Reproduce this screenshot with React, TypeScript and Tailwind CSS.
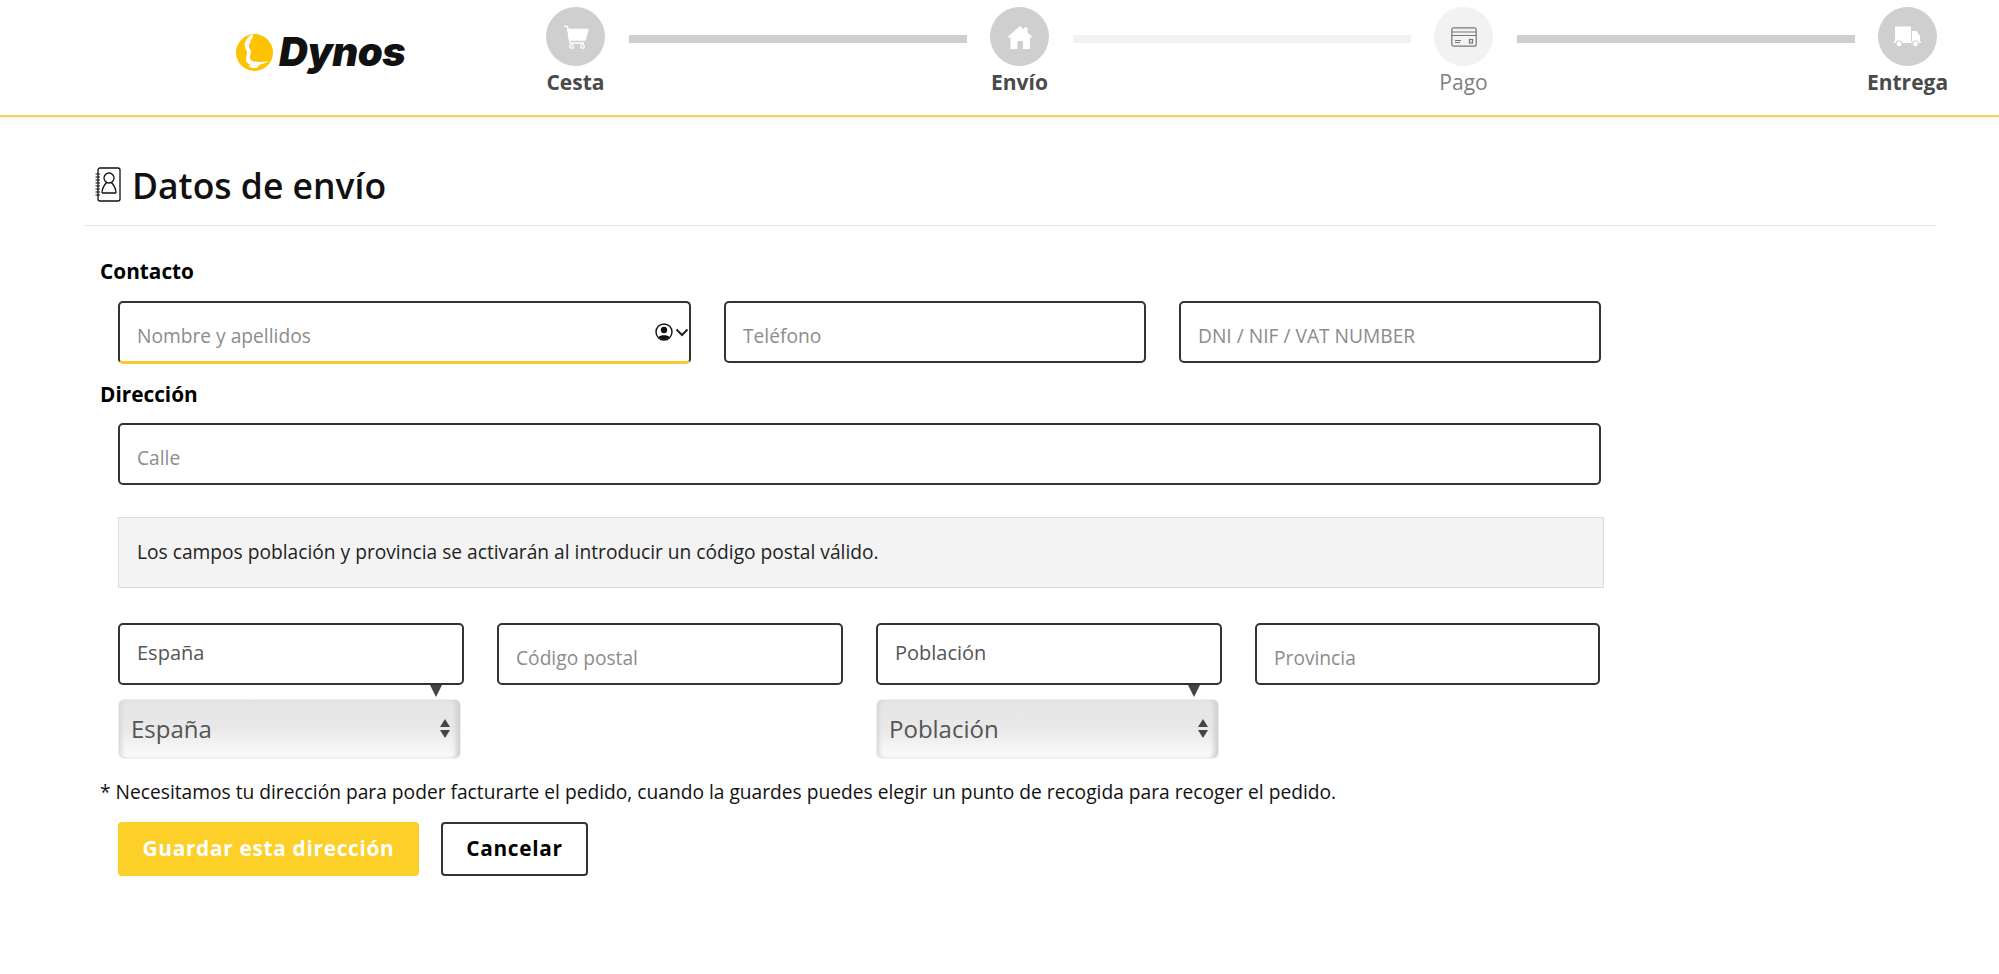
import React from 'react';

const font = { fontFamily: '"Open Sans", sans-serif' };

function DynosLogo() {
  return (
    <div className="flex items-center gap-[6px]">
      <svg width="37" height="37" viewBox="0 0 36 36">
        <circle cx="18" cy="18" r="18" fill="#fdc300" />
        <path d="M16 0 C11 3 8 8 8.500 12 C9 15.500 11.500 16 10.500 20 C9.500 24 9 27 12 29 C17 32 24 30.500 32 26.500 C25 27.500 18 27.500 14.500 25.500 C13 24 13.500 21.500 14.500 19 C15.500 16.500 12.500 14 12.500 11 C12.500 9.500 14 8.500 15 7.500 L13.500 7 C15.500 5 17 3 16 0 Z" fill="#fff" />
        <path d="M12 31 L16 29.500 L20 31 L24 29.500 L20 33 L15.500 33 Z" fill="#fff" />
      </svg>
      <span className="text-[40px] leading-none font-black italic tracking-[-0.5px] text-[#111]" style={{ fontFamily: 'Inter, sans-serif' }}>
        Dynos
      </span>
    </div>
  );
}

function CartIcon() {
  return (
    <svg width="26" height="26" viewBox="0 0 26 26" fill="none" stroke="#fff" strokeWidth="1.300">
      <path d="M1 2 L4.500 2.500 L7 19 L21 19" />
      <path d="M5 5.500 L25 5.500 L22 16 L6.500 16 Z" fill="#fff" />
      <circle cx="8.500" cy="22.500" r="1.800" />
      <circle cx="19.500" cy="22.500" r="1.800" />
    </svg>
  );
}

function HomeIcon() {
  return (
    <svg width="26" height="26" viewBox="0 0 26 26" fill="#fff">
      <path d="M13 2 L17 5.500 L17 3.500 L20.500 3.500 L20.500 8.500 L26 13.500 L23 13.500 L23 25 L16 25 L16 17 L10.500 17 L10.500 25 L3.500 25 L3.500 13.500 L0 13.500 Z" />
    </svg>
  );
}

function CardIcon() {
  return (
    <svg width="26" height="20" viewBox="0 0 26 20" fill="none" stroke="#777" strokeWidth="1.200">
      <rect x="0.800" y="0.800" width="24.400" height="18.400" rx="2" />
      <path d="M1 5 H25 M1 8.500 H25" />
      <path d="M4 13.500 H10 M4 15.500 H9" />
      <rect x="18.500" y="12.500" width="3" height="3.500" />
    </svg>
  );
}

function TruckIcon() {
  return (
    <svg width="27" height="22" viewBox="0 0 27 22" fill="#fff">
      <path d="M1 0.500 H17 V16 H1 Z" />
      <path d="M18 5 H22.500 L26 10 V16 H18 Z" />
      <rect x="0" y="15.500" width="27" height="1.500" />
      <circle cx="5" cy="18" r="3" stroke="#cfcfcf" strokeWidth="1.200" />
      <circle cx="21.500" cy="18" r="3" stroke="#cfcfcf" strokeWidth="1.200" />
    </svg>
  );
}

function BookIcon() {
  return (
    <svg width="26" height="35" viewBox="0 0 26 35" fill="none" stroke="#111" strokeWidth="1.300">
      <rect x="3" y="1" width="22" height="33" rx="2" />
      <circle cx="14" cy="11" r="5" />
      <path d="M7 26 C7 20 10 17.500 11.500 15.500 M21 26 C21 20 18 17.500 16.500 15.500 M7 26 H21" />
      <path d="M0.500 7 H5 M0.500 10 H5 M0.500 13 H5 M0.500 16 H5 M0.500 19 H5 M0.500 22 H5 M0.500 25 H5 M0.500 28 H5" strokeWidth="1.100" />
    </svg>
  );
}

function PersonIcon() {
  return (
    <svg width="18" height="18" viewBox="0 0 18 18">
      <circle cx="9" cy="9" r="8" fill="#fff" stroke="#111" strokeWidth="1.400" />
      <circle cx="9" cy="7" r="3.200" fill="#111" />
      <path d="M3.500 14 C5 11.500 13 11.500 14.500 14 C12 17 6 17 3.500 14 Z" fill="#111" />
    </svg>
  );
}

const steps = [
  { label: 'Cesta', icon: <CartIcon />, done: true },
  { label: 'Envío', icon: <HomeIcon />, done: true },
  { label: 'Pago', icon: <CardIcon />, done: false },
  { label: 'Entrega', icon: <TruckIcon />, done: true },
];

function Stepper() {
  return (
    <div className="flex items-start">
      {steps.map((step, i) => (
        <React.Fragment key={step.label}>
          <div className="relative w-[59px] h-[59px]">
            <div className={`w-[59px] h-[59px] rounded-full flex items-center justify-center ${step.done ? 'bg-[#cfcfcf]' : 'bg-[#f2f2f2]'}`}>
              {step.icon}
            </div>
            <span className={`absolute top-[60px] left-1/2 -translate-x-1/2 text-[21px] leading-[30px] ${step.done ? 'font-bold text-[#4a4a4a]' : 'text-[#808080]'}`}>
              {step.label}
            </span>
          </div>
          {i < steps.length - 1 && (
            <div className={`w-[338px] h-[8px] mt-[28px] ml-[24px] mr-[23px] ${i === 1 ? 'bg-[#f2f2f2]' : 'bg-[#cfcfcf]'}`} />
          )}
        </React.Fragment>
      ))}
    </div>
  );
}

const inputBase =
  'h-[62px] px-[17px] bg-white border-2 border-[#333] rounded-[5px] text-[19.2px] outline-none placeholder:text-[#8c8c8c] text-[#555]';

function FakeSelect({ label }: { label: string }) {
  return (
    <div className="relative">
      <select
        defaultValue={label}
        className="appearance-none w-[343px] h-[60px] mt-[14px] pl-[12px] rounded-[6px] border border-[#efefef] text-[24px] text-[#555] bg-gradient-to-b from-[#e5e5e5] via-[#e9e9e9] to-[#fbfbfb] shadow-[inset_4px_0_4px_-2px_#d4d4d4,inset_-6px_0_4px_-2px_#d0d0d0] outline-none"
      >
        <option>{label}</option>
      </select>
      {/* little tip pointing at the field above */}
      <div className="absolute left-[312px] top-0 w-0 h-0 border-x-[6px] border-x-transparent border-t-[12px] border-t-[#444]" />
      <div className="absolute left-[322px] top-[34px] flex flex-col gap-[3px] pointer-events-none">
        <div className="w-0 h-0 border-x-[5.500px] border-x-transparent border-b-[8px] border-b-[#444]" />
        <div className="w-0 h-0 border-x-[5.500px] border-x-transparent border-t-[8px] border-t-[#444]" />
      </div>
    </div>
  );
}

function App() {
  return (
    <div className="min-h-[974px] bg-white" style={font}>
      <header className="h-[117px] border-b-2 border-[#fbd155] shadow-[0_2px_6px_rgba(0,0,0,0.05)] pt-[7px] flex items-start">
        <div className="ml-[236px] mt-[25px] w-[310px]">
          <DynosLogo />
        </div>
        <Stepper />
      </header>

      <main className="px-[84px] pt-[46px]">
        <div className="w-[1853px] h-[63px] border-b border-[#e8e8e8] pl-[11px] flex items-start gap-[11px]">
          <div className="mt-[4px]">
            <BookIcon />
          </div>
          <h1 className="text-[35.500px] leading-[44px] font-semibold text-[#111]">Datos de envío</h1>
        </div>

        <div className="pl-[16px]">
          <h2 className="mt-[30px] text-[20.800px] leading-[30px] font-bold text-black">Contacto</h2>
          <div className="mt-[15px] ml-[18px] flex gap-[33px]">
            <div className="relative">
              <input
                placeholder="Nombre y apellidos"
                className={`${inputBase} pt-[6px] w-[573px] h-[63px] border-b-[3px] border-b-[#fdc72e]`}
              />
              <div className="absolute right-[2px] top-[22px] flex items-center gap-[2px]">
                <PersonIcon />
                <svg width="14" height="9" viewBox="0 0 14 9" fill="none" stroke="#222" strokeWidth="2">
                  <path d="M1.500 1.500 L7 7 L12.500 1.500" />
                </svg>
              </div>
            </div>
            <input placeholder="Teléfono" className={`${inputBase} pt-[6px] w-[422px]`} />
            <input placeholder="DNI / NIF / VAT NUMBER" className={`${inputBase} pt-[6px] w-[422px]`} />
          </div>

          <h2 className="mt-[15px] text-[20.800px] leading-[30px] font-bold text-black">Dirección</h2>
          <div className="mt-[14px] ml-[18px]">
            <input placeholder="Calle" className={`${inputBase} pt-[6px] w-[1483px]`} />
          </div>

          <div className="mt-[32px] ml-[18px] w-[1486px] h-[71px] bg-[#f3f3f3] border border-[#dcdcdc] flex items-center px-[18px] text-[19.2px] text-[#222]">
            Los campos población y provincia se activarán al introducir un código postal válido.
          </div>

          <div className="mt-[35px] ml-[18px] flex items-start gap-[33px]">
            <div>
              <input defaultValue="España" className={`${inputBase} w-[346px] pb-[4px] text-[20px]`} />
              <FakeSelect label="España" />
            </div>
            <input placeholder="Código postal" className={`${inputBase} pt-[6px] w-[346px]`} />
            <div>
              <input defaultValue="Población" className={`${inputBase} w-[346px] pb-[4px] text-[20px]`} />
              <FakeSelect label="Población" />
            </div>
            <input placeholder="Provincia" className={`${inputBase} pt-[6px] w-[345px]`} />
          </div>

          <p className="mt-[19px] text-[19.2px] leading-[28px] text-[#111]">
            * Necesitamos tu dirección para poder facturarte el pedido, cuando la guardes puedes elegir un punto de recogida para recoger el pedido.
          </p>

          <div className="mt-[16px] ml-[18px] flex gap-[22px]">
            <button className="w-[301px] h-[54px] rounded-[4px] bg-[#fcd029] text-white text-[20.800px] font-bold tracking-[0.7px]">
              Guardar esta dirección
            </button>
            <button className="w-[147px] h-[54px] rounded-[4px] bg-white border-2 border-[#333] text-black text-[20.800px] font-bold tracking-[0.7px]">
              Cancelar
            </button>
          </div>
        </div>
      </main>
    </div>
  );
}

export default App;
